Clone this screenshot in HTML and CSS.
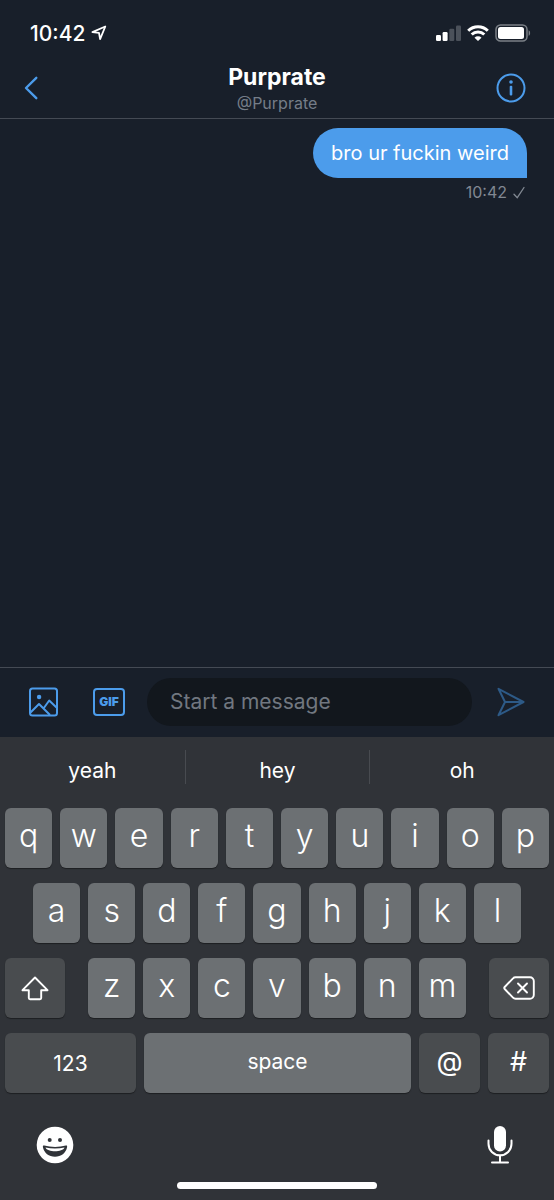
FILE: index.html
```html
<!DOCTYPE html>
<html lang="en">
<head>
<meta charset="utf-8">
<meta name="viewport" content="width=device-width, initial-scale=1">
<title>Purprate – Messages</title>
<link rel="stylesheet" href="styles.css">
</head>
<body>
<div class="app">
  <div class="status-bar">
    <div class="status-left">
      <time>10:42</time>
      <svg width="16" height="16" viewBox="0 0 16 16" fill="none" stroke="#fff" stroke-width="1.8" stroke-linejoin="round"><path d="M14.3 1.5 1.4 7.1 8 7.9 9.1 14.2z"/></svg>
    </div>
    <div class="status-right">
      <svg width="25" height="16" viewBox="0 0 25 16"><g fill="#fff"><rect x="0" y="10" width="5" height="6" rx="1.2"/><rect x="6.6" y="7" width="5" height="9" rx="1.2"/></g><g fill="#4b515a"><rect x="13.3" y="3.8" width="5" height="12.2" rx="1.2"/><rect x="20" y="0.5" width="5" height="15.5" rx="1.2"/></g></svg>
      <svg width="22" height="16" viewBox="0 0 22 16" fill="none" stroke="#fff" stroke-width="3"><path d="M1.2 5.700a14 14 0 0 1 19.600 0"/><path d="M4.700 9.500a9 9 0 0 1 12.600 0"/><path d="M7.500 12.800a5 5 0 0 1 7 0L11 16z" fill="#fff" stroke="none"/></svg>
      <svg width="36" height="18" viewBox="0 0 36 18"><rect x="1" y="1" width="31" height="16" rx="4.5" fill="none" stroke="#7b8087" stroke-width="1.5"/><rect x="3" y="3" width="26" height="12" rx="2.5" fill="#fff"/><path d="M33.600 6.200c2 .8 2 4.800 0 5.600z" fill="#7b8087"/></svg>
    </div>
  </div>

  <header class="header">
    <button class="icon-button back-button" type="button" aria-label="Back">
      <svg width="14" height="24" viewBox="0 0 14 24" fill="none" stroke="#4c9ceb" stroke-width="2.400" stroke-linecap="round" stroke-linejoin="round"><path d="M12.300 1.800 2 12l10.300 10.200"/></svg>
    </button>
    <div class="contact">
      <h1 class="contact-name">Purprate</h1>
      <p class="contact-handle">@Purprate</p>
    </div>
    <button class="icon-button info-button" type="button" aria-label="Conversation info">
      <svg width="30" height="30" viewBox="0 0 30 30"><circle cx="15" cy="15" r="13.500" fill="none" stroke="#4c9ceb" stroke-width="2"/><circle cx="15" cy="9" r="1.800" fill="#4c9ceb"/><rect x="13.700" y="12.800" width="2.600" height="9.800" rx="1" fill="#4c9ceb"/></svg>
    </button>
  </header>

  <main class="messages">
    <p class="bubble">bro ur fuckin weird</p>
    <div class="receipt">
      <time>10:42</time>
      <svg width="12" height="13" viewBox="0 0 12 13" fill="none" stroke="#818892" stroke-width="1.300" stroke-linecap="round" stroke-linejoin="round"><path d="M1 8.300 4.300 11.700 11 1.500"/></svg>
    </div>
  </main>

  <form class="composer">
    <button class="icon-button" type="button" aria-label="Add photo">
      <svg width="30" height="30" viewBox="0 0 30 30" fill="none" stroke="#4c9ceb" stroke-width="2" stroke-linejoin="round"><rect x="2" y="1.500" width="27" height="27" rx="2.500"/><circle cx="11.100" cy="10" r="2.200" fill="#4c9ceb" stroke="none"/><path d="M2.500 25.500 11 17 22 28M15.500 21.500 21.200 13.500 28.500 20.500"/></svg>
    </button>
    <button class="icon-button gif-button" type="button" aria-label="Add GIF"><span class="gif">GIF</span></button>
    <input class="message-input" type="text" placeholder="Start a message" aria-label="Start a message">
    <button class="icon-button" type="submit" aria-label="Send">
      <svg width="28" height="30" viewBox="0 0 28 30" fill="none" stroke="#2d5a87" stroke-width="2" stroke-linejoin="round"><path d="M1.500 1.800 26.500 15 1.500 28.200 8 15zM8 15H26"/></svg>
    </button>
  </form>

  <section class="keyboard" aria-label="Keyboard">
    <div class="suggestions">
      <button type="button">yeah</button>
      <button type="button">hey</button>
      <button type="button">oh</button>
    </div>
    <div class="keys">
      <div class="row">
        <button class="key" type="button">q</button><button class="key" type="button">w</button><button class="key" type="button">e</button><button class="key" type="button">r</button><button class="key" type="button">t</button><button class="key" type="button">y</button><button class="key" type="button">u</button><button class="key" type="button">i</button><button class="key" type="button">o</button><button class="key" type="button">p</button>
      </div>
      <div class="row row-inset">
        <button class="key" type="button">a</button><button class="key" type="button">s</button><button class="key" type="button">d</button><button class="key" type="button">f</button><button class="key" type="button">g</button><button class="key" type="button">h</button><button class="key" type="button">j</button><button class="key" type="button">k</button><button class="key" type="button">l</button>
      </div>
      <div class="row row-shift">
        <button class="key key-dark" type="button" aria-label="Shift">
          <svg width="28" height="25" viewBox="0 0 28 25" fill="none" stroke="#fff" stroke-width="1.900" stroke-linejoin="round"><path d="M14 1.500 1.500 14.200H7.800V22a1.200 1.200 0 0 0 1.200 1.200H19a1.200 1.200 0 0 0 1.200-1.200V14.200H26.500z"/></svg>
        </button>
        <div class="row letters">
          <button class="key" type="button">z</button><button class="key" type="button">x</button><button class="key" type="button">c</button><button class="key" type="button">v</button><button class="key" type="button">b</button><button class="key" type="button">n</button><button class="key" type="button">m</button>
        </div>
        <button class="key key-dark" type="button" aria-label="Delete">
          <svg width="32" height="24" viewBox="0 0 32 24" fill="none" stroke="#fff" stroke-width="1.900" stroke-linejoin="round" stroke-linecap="round"><path d="M12.500 1.200H27a3.800 3.800 0 0 1 3.800 3.800V19a3.800 3.800 0 0 1-3.800 3.800H12.500q-1.500 0-2.500-1.100L1.700 13q-.9-1 0-2L10 2.300q1-1.100 2.500-1.100z"/><path d="M15 7.500 24 16.500M24 7.500 15 16.500"/></svg>
        </button>
      </div>
      <div class="row">
        <button class="key key-dark key-numbers" type="button">123</button>
        <button class="key key-space" type="button">space</button>
        <button class="key key-dark key-symbol" type="button">@</button>
        <button class="key key-dark key-symbol" type="button">#</button>
      </div>
    </div>
    <div class="keyboard-footer">
      <button class="icon-button" type="button" aria-label="Emoji">
        <svg width="38" height="38" viewBox="0 0 38 38"><circle cx="19" cy="19" r="18.300" fill="#fff"/><g fill="#303338"><circle cx="13.700" cy="14" r="2"/><circle cx="24" cy="14" r="2"/><path d="M8.300 19.500c6.500 1.900 15 1.900 21.500 0 1.200-.3 1.500.3 1.300 1.500-1.100 6-6 9.800-12.100 9.800S8 27 6.900 21c-.2-1.200.2-1.800 1.400-1.500z"/></g><path d="M9.500 21.500c5.800 1.300 13.200 1.300 19 0-1.800 5-17.200 5-19 0z" fill="#fff"/></svg>
      </button>
      <button class="icon-button" type="button" aria-label="Dictate">
        <svg width="26" height="40" viewBox="0 0 26 40"><rect x="7" y="1" width="12" height="25.500" rx="6" fill="#fff"/><path d="M1.500 15.500v3.300a11.500 11.500 0 0 0 23 0v-3.300M13 30.500v7M5 37.500H21" fill="none" stroke="#fff" stroke-width="2" stroke-linecap="round"/></svg>
      </button>
    </div>
    <div class="home-indicator"></div>
  </section>
</div>
</body>
</html>
```
FILE: styles.css
```css
* {
  box-sizing: border-box;
}

body {
  margin: 0;
  background: #181f2a;
  color: #fff;
  font-family: Inter, "Liberation Sans", sans-serif;
}

h1,
p {
  margin: 0;
}

button,
input {
  border: 0;
  padding: 0;
  color: inherit;
  font: inherit;
}

button {
  background: none;
}

svg {
  display: block;
}

.app {
  display: flex;
  flex-direction: column;
  min-height: 100vh;
}

.status-bar {
  display: flex;
  justify-content: space-between;
  align-items: center;
  height: 62px;
  padding: 4px 23px 0 30px;
}

.status-left,
.status-right {
  display: flex;
  align-items: center;
  gap: 6px;
}

.status-left {
  font-size: 21px;
  font-weight: 500;
}

.header {
  display: grid;
  grid-template-columns: 1fr auto 1fr;
  align-items: center;
  padding: 0 24px 4px;
  border-bottom: 1px solid #444a54;
}

.back-button {
  justify-self: start;
}

.info-button {
  justify-self: end;
  margin-right: 4px;
}

.contact {
  text-align: center;
}

.contact-name {
  font-size: 23px;
  font-weight: 700;
  line-height: 30px;
}

.contact-handle {
  color: #757d88;
  font-size: 16px;
  line-height: 22px;
}

.messages {
  display: flex;
  flex: 1;
  flex-direction: column;
  align-items: flex-end;
  gap: 4px;
  padding: 9px 27px;
}

.bubble {
  padding: 11px 18px;
  border-radius: 25px 25px 0 25px;
  background: #4c9ceb;
  font-size: 20px;
  line-height: 28px;
}

.receipt {
  display: flex;
  align-items: center;
  gap: 6px;
  padding-right: 2px;
  color: #818892;
  font-size: 16px;
  line-height: 20px;
}

.composer {
  display: flex;
  align-items: center;
  height: 70px;
  padding: 0 29px 2px 28px;
  border-top: 1px solid #444a54;
}

.gif-button {
  margin: 0 22px 0 35px;
}

.gif {
  display: grid;
  place-items: center;
  width: 32px;
  height: 28px;
  border: 2px solid #4c9ceb;
  border-radius: 4px;
  color: #4c9ceb;
  font-size: 12px;
  font-weight: 900;
}

.message-input {
  flex: 1;
  min-width: 0;
  height: 48px;
  margin-right: 25px;
  padding: 0 23px;
  border-radius: 24px;
  background: #12171d;
  font-size: 21px;
}

.message-input::placeholder {
  color: #717780;
  opacity: 1;
}

.keyboard {
  background: #303338;
}

.suggestions {
  display: grid;
  grid-template-columns: repeat(3, 1fr);
  padding: 13px 0 24px;
}

.suggestions button {
  height: 34px;
  padding-top: 8px;
  font-size: 21px;
  line-height: 26px;
}

.suggestions button + button {
  border-left: 1px solid #484b50;
}

.keys {
  display: grid;
  gap: 15px;
  padding: 0 5px;
}

.row {
  display: flex;
  gap: 8px;
}

.row-inset {
  padding: 0 28px;
}

.row-shift {
  gap: 23px;
}

.letters {
  flex: 1;
}

.key {
  display: grid;
  flex: 1;
  place-items: center;
  height: 60px;
  min-width: 0;
  padding-bottom: 5px;
  border-radius: 6px;
  background: #6c7073;
  box-shadow: 0 1px 1px #1d1f22;
  font-size: 32px;
  font-weight: 300;
}

.key-dark {
  flex: 0 0 60px;
  padding: 0;
  background: #494c4f;
}

.key-numbers {
  flex-basis: 131px;
  font-size: 21px;
  font-weight: 400;
}

.key-space {
  padding: 0 0 3px;
  font-size: 21px;
  font-weight: 400;
}

.key-symbol {
  flex-basis: 61px;
  padding-bottom: 3px;
  font-size: 27px;
  font-weight: 400;
}

.keyboard-footer {
  display: flex;
  justify-content: space-between;
  align-items: center;
  padding: 32px 41px 17px 36px;
}

.home-indicator {
  width: 36%;
  height: 7px;
  margin: 0 auto 11px;
  border-radius: 4px;
  background: #fff;
}
```
